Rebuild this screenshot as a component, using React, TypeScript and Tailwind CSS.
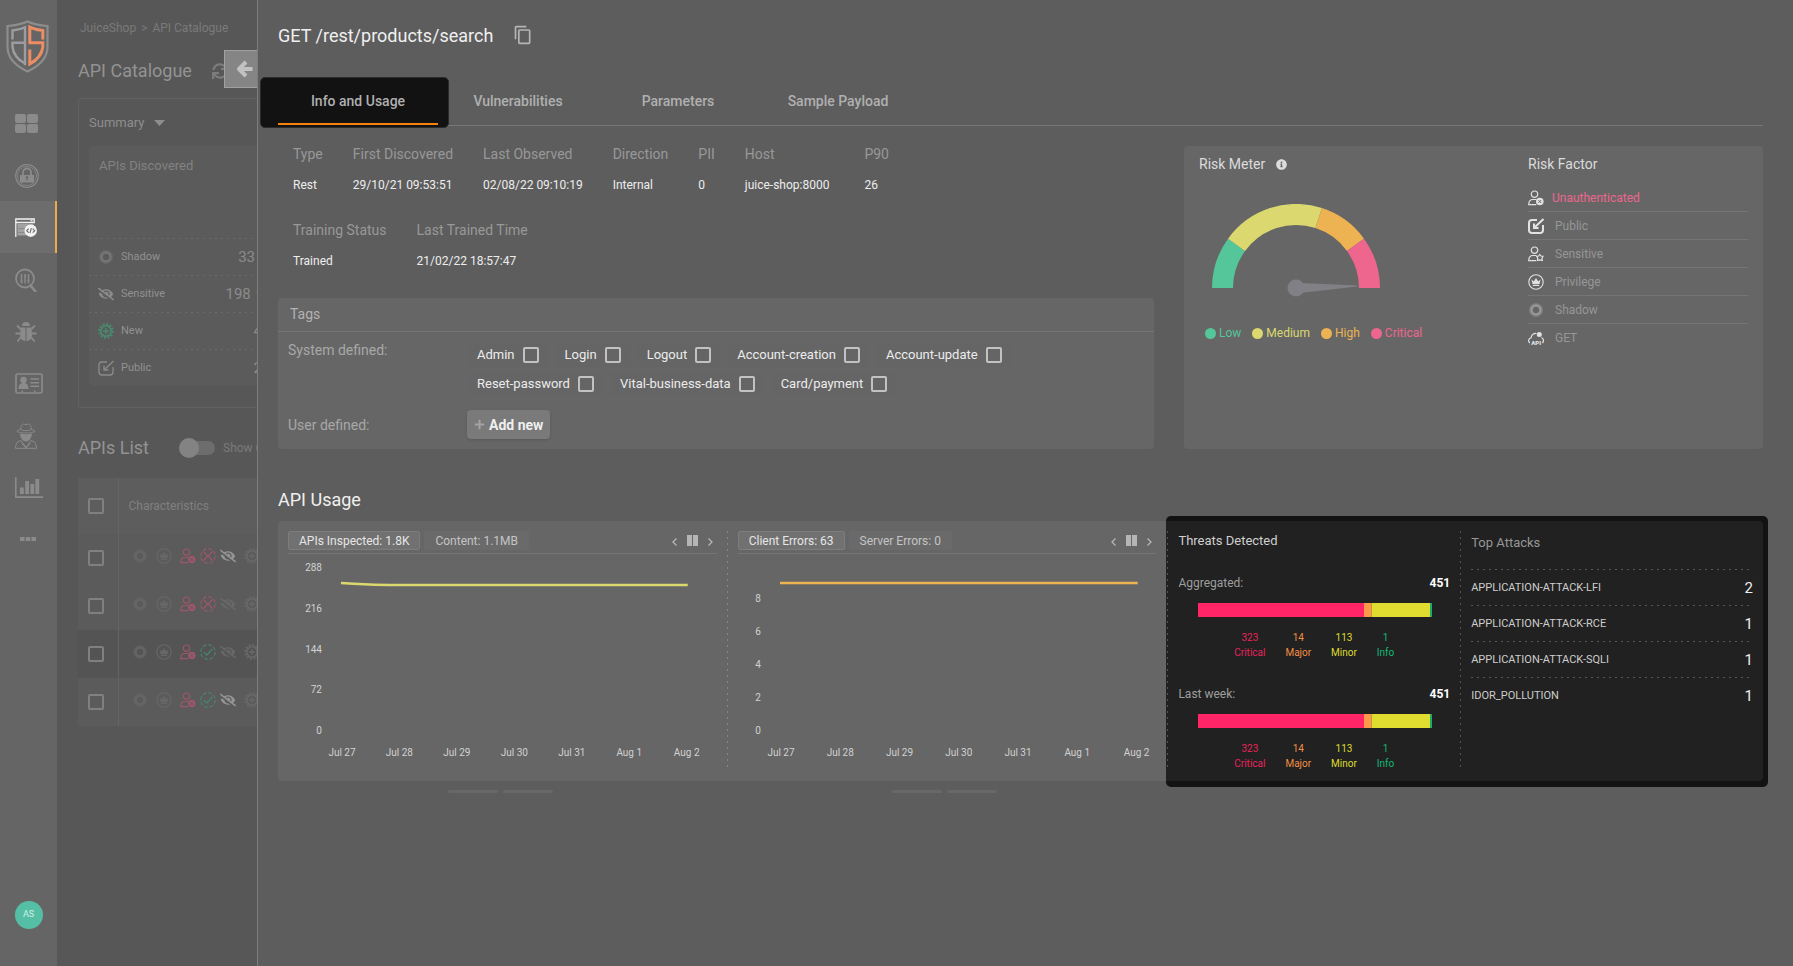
import type { ReactNode } from "react";
import { FaEyeSlash, FaInfoCircle, FaPlus, FaSync } from "react-icons/fa";
import { MdContentCopy } from "react-icons/md";
import clsx from "clsx";

const TABS = ["Info and Usage", "Vulnerabilities", "Parameters", "Sample Payload"];

const INFO = [
  ["Type", "Rest"],
  ["First Discovered", "29/10/21 09:53:51"],
  ["Last Observed", "02/08/22 09:10:19"],
  ["Direction", "Internal"],
  ["PII", "0"],
  ["Host", "juice-shop:8000"],
  ["P90", "26"],
];

const TRAINING = [
  ["Training Status", "Trained"],
  ["Last Trained Time", "21/02/22 18:57:47"],
];

const TAG_ROWS = [
  ["Admin", "Login", "Logout", "Account-creation", "Account-update"],
  ["Reset-password", "Vital-business-data", "Card/payment"],
];

const LEVELS = [
  { name: "Low", text: "text-[#55c59a]", dot: "bg-[#55c59a]" },
  { name: "Medium", text: "text-[#dbd86f]", dot: "bg-[#dbd86f]" },
  { name: "High", text: "text-[#edb352]", dot: "bg-[#edb352]" },
  { name: "Critical", text: "text-[#ee668e]", dot: "bg-[#ee668e]" },
];

const SEVERITIES = [
  { name: "Critical", count: 323, text: "text-[#e8235c]", bar: "bg-[#ff2566]" },
  { name: "Major", count: 14, text: "text-[#f28f45]", bar: "bg-[#ff9848]" },
  { name: "Minor", count: 113, text: "text-[#dedb2e]", bar: "bg-[#e1dc30]" },
  { name: "Info", count: 1, text: "text-[#15b877]", bar: "bg-[#1cab6c]" },
];

const ATTACKS = [
  ["APPLICATION-ATTACK-LFI", 2],
  ["APPLICATION-ATTACK-RCE", 1],
  ["APPLICATION-ATTACK-SQLI", 1],
  ["IDOR_POLLUTION", 1],
];

const DAYS = ["Jul 27", "Jul 28", "Jul 29", "Jul 30", "Jul 31", "Aug 1", "Aug 2"];

/* ---------- icons ---------- */

function Logo() {
  return (
    <svg viewBox="0 0 43 53" className="h-[53px] w-[43px]" fill="none">
      <path d="M21.500 1.500C15.500 4.300 8.500 5.500 1.500 6v21c0 11 8.500 19 20 24.500C33 46 41.500 38 41.500 27V6C34.500 5.500 27.500 4.300 21.500 1.500z" stroke="#8d8d8d" strokeWidth="2.200" />
      <path d="M6.500 19.500v-9C11.500 10 15.500 9 19 7.200v38M19 22.800H6.500V27c.8 7 5 12.500 12.500 16.500" stroke="#9d9da1" strokeWidth="2.400" />
      <path d="M36.800 19.500v-9C32 10 27.500 9 23.800 7.200v15.600h13V27c-.8 7-5 12.500-13 17V29.500" stroke="#ec8d66" strokeWidth="3" />
    </svg>
  );
}

function DashboardIcon() {
  return (
    <svg viewBox="0 0 23 19" className="h-[19px] w-[23px]" fill="currentColor">
      <rect width="11" height="9" rx="2" />
      <rect x="12" width="11" height="9" rx="2" />
      <rect y="10" width="11" height="9" rx="2" />
      <rect x="12" y="10" width="11" height="9" rx="2" />
    </svg>
  );
}

function LockIcon() {
  return (
    <svg viewBox="0 0 24 24" className="size-6" fill="none" stroke="currentColor">
      <circle cx="12" cy="12" r="11.300" strokeWidth="1.200" />
      <circle cx="12" cy="12" r="9.500" strokeWidth=".8" />
      <path d="M8 11V8.500a4 4 0 0 1 8 0V11" strokeWidth="1.800" />
      <path d="M5 11h14v7.500H5zM11.300 16.500h1.400l-.3-2a1.200 1.200 0 1 0-.8 0z" fill="currentColor" fillRule="evenodd" stroke="none" />
    </svg>
  );
}

function ApiIcon() {
  return (
    <svg viewBox="0 0 22 20" className="h-5 w-[22px]" fill="none">
      <path d="M.8 19V1h18.400v3.500H1" stroke="#f2f2f2" strokeWidth="1.300" />
      <path d="M15.500 2.700h2" stroke="#f2f2f2" strokeWidth="1.200" />
      <path d="M2.500 6h16v4h-7v7.500h-9z" fill="#a3a3a3" />
      <path d="M2.500 10.500h7M2.500 14.500h7" stroke="#8a8a8a" />
      <circle cx="15.700" cy="12.700" r="6.200" fill="#f2f2f2" />
      <path d="m13.700 10.700-2 2 2 2m4-4 2 2-2 2m-1.300-4.500-1.500 5" stroke="#6a6a6a" strokeWidth="1.100" />
    </svg>
  );
}

function SearchIcon() {
  return (
    <svg viewBox="0 0 22 24" className="h-6 w-[22px]" fill="none" stroke="currentColor">
      <circle cx="10" cy="10.500" r="9" strokeWidth="1.800" />
      <path d="m15.500 17.500 5 6" strokeWidth="2.600" strokeLinecap="round" />
      <path d="M6.500 6v9.500M10 6v9.500M13.500 6v9.500" strokeWidth="1.500" />
      <path d="M5.500 13h2M9 8.500h2M12.500 12.500h2" strokeWidth="1.500" />
    </svg>
  );
}

function BugIcon() {
  return (
    <svg viewBox="0 0 22 22" className="size-[22px]" fill="currentColor">
      <path d="M7 5a4 4 0 0 1 8 0z" />
      <path d="M5.500 6.500H10.500V20C7.500 20 5 17.500 5 14.500zM11.500 6.500h5L17 14.500c0 3-2.500 5.500-5.500 5.500z" />
      <path d="M5.500 8 2 4.500M5 12.500H.5M5.500 16.500 2.500 20.500M16.500 8 20 4.500M17 12.500h4.500M16.500 16.500l3 4" stroke="currentColor" strokeWidth="1.800" />
    </svg>
  );
}

function IdCardIcon() {
  return (
    <svg viewBox="0 0 28 21" className="h-[21px] w-7" fill="none" stroke="currentColor">
      <rect x="1" y="1" width="26" height="19" rx="1.500" strokeWidth="1.700" />
      <circle cx="8.500" cy="7" r="3.200" fill="currentColor" stroke="none" />
      <path d="M3.500 16c0-4 1.500-6 5-6s5 2 5 6zM6.500 17.500h1.500V19H6.500zM19 17.500h1.500V19H19z" fill="currentColor" stroke="none" />
      <path d="M15.500 6H24M15.500 9.700H24M15.500 13.300H24" strokeWidth="1.600" />
    </svg>
  );
}

function SpyIcon() {
  return (
    <svg viewBox="0 0 22 26" className="h-[26px] w-[22px]" fill="none" stroke="currentColor">
      <path d="M5.500 6.500C6 3 7 1 8.500 1c1 0 1.500.6 2.500.6S12.500 1 13.500 1C15 1 16 3 16.500 6.500c2 .6 3.500 1.300 3.500 2-1 .8-5 1.500-9 1.500s-8-.7-9-1.500c0-.7 1.500-1.400 3.500-2zM5.500 6.500C8 8 14 8 16.500 6.500" strokeWidth=".9" />
      <path d="M5 10.500c4 .9 8 .9 12 0 0 3.500-2.500 8-6 8s-6-4.500-6-8z" fill="currentColor" stroke="none" />
      <path d="M6 17.500 2.500 19C1 21 .6 23 .5 25.300h21c-.1-2.300-.5-4.300-2-6.300L16 17.500l-5 7-5-7zM6.500 20l4.500 5 4.500-5" strokeWidth="1" />
    </svg>
  );
}

function ChartIcon() {
  return (
    <svg viewBox="0 0 28 21" className="h-[21px] w-7" fill="currentColor">
      <path d="M0 0h1.600v19.300H28V21H0zM5 10.500h3.800V17H5zM10.200 4H14v13h-3.800zM15.400 7h3.800v10h-3.800zM20.400 2h3.800v15h-3.800z" />
    </svg>
  );
}

function DotsIcon() {
  return (
    <svg viewBox="0 0 16 4" className="h-1 w-4" fill="currentColor">
      <path d="M0 0h4.500v4H0zM5.700 0h4.500v4H5.700zM11.400 0H16v4h-4.600z" />
    </svg>
  );
}

function ArrowIcon() {
  return (
    <svg viewBox="0 0 18 18" className="size-[18px]" fill="none" stroke="currentColor" strokeWidth="4">
      <path d="M11 2 4 9l7 7M5 9h12.500" strokeLinejoin="round" />
    </svg>
  );
}

function RingIcon() {
  return (
    <svg viewBox="0 0 16 16" className="size-4" fill="none" stroke="currentColor">
      <circle cx="8" cy="8" r="6.300" strokeWidth="1.400" opacity=".4" />
      <circle cx="8" cy="8" r="4.500" strokeWidth="2.600" opacity=".85" />
    </svg>
  );
}

function CrownIcon() {
  return (
    <svg viewBox="0 0 16 16" className="size-4" fill="none" stroke="currentColor">
      <circle cx="8" cy="8" r="7.200" strokeWidth="1.100" />
      <path d="m3.500 5.500 2.300 2L8 4l2.200 3.500 2.300-2-1 4.500h-7zM4.800 10.800h6.400V12H4.800z" fill="currentColor" stroke="none" />
    </svg>
  );
}

function UserBadgeIcon({ star = false }: { star?: boolean }) {
  return (
    <svg viewBox="0 0 16 16" className="size-4" fill="none" stroke="currentColor">
      <circle cx="6.500" cy="4.200" r="3.200" strokeWidth="1.200" />
      <path d="M8.500 9.500H5C2 9.500.7 11.500.7 14.700h7.500" strokeWidth="1.200" />
      {star ? (
        <path d="m11.800 8.500 1.200 1.500 2 .3-1 1.800.3 2.300-2.500-.5-2.300.5.200-2.300-1-1.800 2-.3z" strokeWidth="1.200" />
      ) : (
        <>
          <circle cx="11.800" cy="11.500" r="3.800" fill="currentColor" stroke="none" />
          <path d="m10.400 10.100 2.800 2.800m0-2.800-2.800 2.800" stroke="#5d5d5d" strokeWidth=".9" />
        </>
      )}
    </svg>
  );
}

function StatusIcon({ ok }: { ok: boolean }) {
  return (
    <svg viewBox="0 0 16 16" className="size-4" fill="none" stroke="currentColor">
      <circle cx="8" cy="8" r="7.300" strokeWidth="1.100" strokeDasharray="4 1.700" />
      <path d={ok ? "m4 8.300 2.800 2.800L12.300 5" : "m3.500 3.500 9 9m0-9-9 9"} strokeWidth="1.300" />
    </svg>
  );
}

function GearPlusIcon() {
  return (
    <svg viewBox="0 0 16 16" className="size-4" fill="none" stroke="currentColor">
      <circle cx="8" cy="8" r="6.800" strokeWidth="2" strokeDasharray="1.900 1.660" />
      <circle cx="8" cy="8" r="5.200" strokeWidth="1.600" />
      <path d="M8 5v6M5 8h6" strokeWidth="1.300" />
    </svg>
  );
}

function PublicIcon({ bold = false }: { bold?: boolean }) {
  return (
    <svg viewBox="0 0 16 16" className="size-4" fill="none" stroke="currentColor" strokeWidth={bold ? 2 : 1.3}>
      <path d="M9 2H4a3 3 0 0 0-3 3v7a3 3 0 0 0 3 3h8a3 3 0 0 0 3-3V7" />
      <path d="M15.500 1 7 9M6 5.500V10h4.500" />
    </svg>
  );
}

function CloudApiIcon() {
  return (
    <svg viewBox="0 0 16 16" className="size-4" fill="none" stroke="currentColor">
      <path d="M1.800 13C0 11.500.2 8.300 3 7.800 3.500 4.500 6 3 8.500 3.500M13.500 7.500c2.300 1 2.500 4 .9 5.500" strokeWidth="1.200" />
      <circle cx="11.300" cy="4.500" r="2.500" fill="currentColor" stroke="none" />
      <text x="8.200" y="14.600" textAnchor="middle" fontSize="6" fontWeight="900" fill="currentColor" stroke="none">
        API
      </text>
    </svg>
  );
}

/* ---------- shared bits ---------- */

function Checkbox({ label }: { label?: string }) {
  return (
    <input
      type="checkbox"
      aria-label={label}
      className="size-4 shrink-0 appearance-none rounded-xs border-2 border-current"
    />
  );
}

function HDash({ className }: { className?: string }) {
  return (
    <div
      className={clsx(
        "h-px bg-[repeating-linear-gradient(90deg,currentColor_0_2px,transparent_2px_6px)]",
        className
      )}
    />
  );
}

function VDash({ className }: { className?: string }) {
  return (
    <div
      className={clsx(
        "my-[10px] w-px shrink-0 bg-[repeating-linear-gradient(180deg,currentColor_0_2px,transparent_2px_6px)]",
        className
      )}
    />
  );
}

/* ---------- left side ---------- */

function NavItem({ label, active, children }: { label: string; active?: boolean; children: ReactNode }) {
  return (
    <a
      href="#"
      aria-label={label}
      className={clsx(
        "flex h-[52px] items-center border-r-2",
        label === "More" ? "pl-5" : "pt-px pl-[15px]",
        active ? "border-[#edac4c] bg-[#6d6d6d]" : "border-transparent"
      )}
    >
      {children}
    </a>
  );
}

function Sidebar() {
  return (
    <nav className="flex w-[57px] shrink-0 flex-col bg-[#656565] text-[#8b8b8b]">
      <div className="flex h-[97px] pt-[20px] pl-[6px]">
        <Logo />
      </div>
      <NavItem label="Dashboard"><DashboardIcon /></NavItem>
      <NavItem label="Security"><LockIcon /></NavItem>
      <NavItem label="API Catalogue" active><ApiIcon /></NavItem>
      <NavItem label="Discover"><SearchIcon /></NavItem>
      <NavItem label="Bugs"><BugIcon /></NavItem>
      <NavItem label="Identities"><IdCardIcon /></NavItem>
      <NavItem label="Threat Actors"><SpyIcon /></NavItem>
      <NavItem label="Reports"><ChartIcon /></NavItem>
      <NavItem label="More"><DotsIcon /></NavItem>
      <button className="mx-auto mt-auto mb-[37px] flex size-7 items-center justify-center rounded-full bg-[#55bfa5] text-[9px] text-[#d5eee7]">
        AS
      </button>
    </nav>
  );
}

function SummaryRow({ icon, label, value, width }: { icon: ReactNode; label: string; value: string; width: string }) {
  return (
    <>
      <HDash className="text-[#6a6a6a]" />
      <div className="flex h-9 items-center pl-[9px] text-[#8b8b8b]">
        {icon}
        <span className="ml-[7px] w-[88px] text-[11px] text-[#919191]">{label}</span>
        <span className={clsx("shrink-0 text-right text-[15px]", width)}>{value}</span>
      </div>
    </>
  );
}

const API_ROWS = [
  { ok: false, sensitive: true, dark: false },
  { ok: false, sensitive: false, dark: false },
  { ok: true, sensitive: false, dark: true },
  { ok: true, sensitive: true, dark: false },
];

function Catalogue() {
  return (
    <div className="w-[200px] shrink-0 overflow-hidden bg-[#575757] pl-[21px] whitespace-nowrap">
      <div className="flex gap-[5px] pt-5 pl-[2px] text-[12px] leading-4 text-[#7a7a7a]">
        <a href="#">JuiceShop</a>
        <span>&gt;</span>
        <a href="#">API Catalogue</a>
      </div>
      <div className="mt-[23px] flex items-center gap-5 leading-6 text-[#939393]">
        <h1 className="text-[18px]">API Catalogue</h1>
        <FaSync className="size-4 shrink-0 text-[#7c7c7c]" />
      </div>

      <section className="mt-[15px] h-[310px] w-[300px] rounded-xs border border-[#616161] px-[10px] pt-[14px]">
        <button className="flex items-center gap-[10px] text-[13px] leading-5 text-[#8e8e8e]">
          Summary
          <svg viewBox="0 0 11 6" className="h-[6px] w-[11px]" fill="currentColor">
            <path d="M0 0h11L5.500 6z" />
          </svg>
        </button>
        <div className="mt-[13px] rounded-sm bg-[#5b5b5b]">
          <h2 className="h-[92px] pt-[10px] pl-[10px] text-[13px] leading-5 text-[#828282]">APIs Discovered</h2>
          <SummaryRow
            icon={
              <span className="text-[#7a7a7a]">
                <RingIcon />
              </span>
            }
            label="Shadow"
            value="33"
            width="w-[46px]"
          />
          <SummaryRow icon={<FaEyeSlash className="size-4" />} label="Sensitive" value="198 ↑" width="w-[53px]" />
          <SummaryRow
            icon={
              <span className="text-[#4a8b70]">
                <GearPlusIcon />
              </span>
            }
            label="New"
            value="4"
            width="w-[53px]"
          />
          <SummaryRow icon={<PublicIcon />} label="Public" value="2" width="w-[53px]" />
        </div>
      </section>

      <div className="mt-[28px] flex items-center leading-6">
        <h1 className="w-[101px] shrink-0 text-[18px] text-[#939393]">APIs List</h1>
        <button role="switch" aria-checked="false" aria-label="Show Columns" className="flex h-5 w-9 shrink-0 items-center">
          <span className="z-10 size-5 shrink-0 rounded-full bg-[#838383]" />
          <span className="-ml-2 h-[14px] w-6 shrink-0 rounded-r-full bg-[#6d6d6d]" />
        </button>
        <span className="ml-2 text-[12px] text-[#7a7a7a]">Show C</span>
      </div>

      <table className="mt-[18px] w-[300px] border-collapse text-left text-[#808080]">
        <thead>
          <tr className="h-14 bg-[#5d5d5d]">
            <th className="w-10 border-r border-[#646464] pl-[10px]">
              <span className="flex"><Checkbox label="Select all" /></span>
            </th>
            <th className="pl-[10px] text-[12px] font-normal">Characteristics</th>
          </tr>
        </thead>
        <tbody>
          {API_ROWS.map((row, i) => (
            <tr key={i} className={clsx("h-12", row.dark ? "bg-[#545454]" : "bg-[#5b5b5b]")}>
              <td className="border-r border-[#646464] pl-[10px]">
                <span className="flex"><Checkbox label={`Select API ${i + 1}`} /></span>
              </td>
              <td className="pb-1 pl-[13px] text-[#686868]">
                <span className="flex items-center">
                  <RingIcon />
                  <span className="ml-2"><CrownIcon /></span>
                  <span className="ml-2 text-[#9c566a]"><UserBadgeIcon /></span>
                  <span className={clsx("ml-1", row.ok ? "text-[#47856c]" : "text-[#9c566a]")}>
                    <StatusIcon ok={row.ok} />
                  </span>
                  <FaEyeSlash className={clsx("ml-1 size-4", row.sensitive && "text-[#949494]")} />
                  <span className="ml-2"><GearPlusIcon /></span>
                </span>
              </td>
            </tr>
          ))}
        </tbody>
      </table>
    </div>
  );
}

/* ---------- drawer ---------- */

function InfoList({ items }: { items: string[][] }) {
  return (
    <dl className="flex gap-[30px] pl-[15px]">
      {items.map(([label, value]) => (
        <div key={label} className={clsx(label === "Host" && "pr-[5px]")}>
          <dt className="text-[14px] leading-5 text-[#989898]">{label}</dt>
          <dd className="mt-[13px] text-[12px] leading-4 text-[#ededed]">{value}</dd>
        </div>
      ))}
    </dl>
  );
}

function Tags() {
  return (
    <section className="mt-[29px] rounded-sm bg-[#666666] text-[14px]">
      <h2 className="border-b border-[#757575] py-[6px] pl-3 leading-[21px] text-[#b2b2b2]">Tags</h2>
      <div className="px-[10px] pb-[10px] leading-5 text-[#a8a8a8]">
        <div className="flex pt-2">
          <span className="w-[180px] shrink-0">System defined:</span>
          <div className="flex flex-col gap-[5px] pt-[3px]">
            {TAG_ROWS.map((row) => (
              <div key={row[0]} className="flex flex-wrap gap-2">
                {row.map((tag) => (
                  <label
                    key={tag}
                    className="flex h-6 items-center gap-2 rounded-sm bg-[#656565] px-[9px] text-[13px] text-[#ececec]"
                  >
                    {tag}
                    <span className="flex text-[#c2c2c2]"><Checkbox /></span>
                  </label>
                ))}
              </div>
            ))}
          </div>
        </div>
        <div className="mt-[14px] flex items-center">
          <span className="w-[179px] shrink-0">User defined:</span>
          <button className="flex h-[29px] items-center gap-1 rounded-sm bg-[#7a7a7a] px-[7px] font-bold text-[#efefef] shadow-sm">
            <FaPlus className="size-[11px] text-[#a3a3a3]" />
            Add new
          </button>
        </div>
      </div>
    </section>
  );
}

function Gauge() {
  return (
    <svg viewBox="0 0 168 94" className="h-[94px] w-[168px]" fill="none" role="img" aria-label="Risk gauge">
      <g strokeWidth="21">
        <path d="M10.500 84A73.500 73.500 0 0 1 24.540 40.800" stroke="#55c59a" />
        <path d="M24.540 40.800A73.500 73.500 0 0 1 106.710 14.100" stroke="#dbd86f" />
        <path d="M106.710 14.100A73.500 73.500 0 0 1 143.460 40.800" stroke="#edb352" />
        <path d="M143.460 40.800A73.500 73.500 0 0 1 157.500 84" stroke="#ee668e" />
      </g>
      <circle cx="84" cy="84" r="8.500" fill="#808086" />
      <path d="M88 79l57.500 2.500v1L88 89z" fill="#808086" />
    </svg>
  );
}

const FACTORS = [
  { name: "Unauthenticated", icon: <UserBadgeIcon />, hot: true },
  { name: "Public", icon: <PublicIcon bold /> },
  { name: "Sensitive", icon: <UserBadgeIcon star /> },
  { name: "Privilege", icon: <CrownIcon /> },
  { name: "Shadow", icon: <RingIcon />, dim: true },
  { name: "GET", icon: <CloudApiIcon /> },
];

function Risk() {
  return (
    <section className="mt-5 flex justify-between rounded-sm bg-[#666666] px-[15px] pt-2">
      <div>
        <h2 className="flex items-center gap-[11px] text-[14px] leading-5 text-[#dcdcdc]">
          Risk Meter
          <FaInfoCircle className="size-[11px]" />
        </h2>
        <div className="mt-[30px] pl-[13px]">
          <Gauge />
        </div>
        <ul className="mt-[27px] flex gap-[11px] pl-[6px] text-[12px] leading-4">
          {LEVELS.map((l) => (
            <li key={l.name} className={clsx("flex items-center gap-[3px]", l.text)}>
              <span className={clsx("size-[11px] rounded-full", l.dot)} />
              {l.name}
            </li>
          ))}
        </ul>
      </div>
      <div className="w-[220px]">
        <h2 className="text-[14px] leading-5 text-[#dcdcdc]">Risk Factor</h2>
        <ul className="mt-[10px] text-[12px]">
          {FACTORS.map((f) => (
            <li
              key={f.name}
              className="flex h-7 items-center border-b border-[#767676] last:border-none"
            >
              <span className={f.dim ? "text-[#a0a0a0]" : "text-[#e2e2e2]"}>{f.icon}</span>
              <span className={f.hot ? "ml-2 text-[#ee668e]" : "ml-[11px] text-[#969696]"}>{f.name}</span>
            </li>
          ))}
        </ul>
      </div>
    </section>
  );
}

type ChartPanelProps = {
  tabs: [string, string];
  width: number;
  axisX: number;
  ticks: [string, number][];
  firstDay: number;
  dayStep: number;
  path: string;
  stroke: string;
};

function ChartPanel({ tabs, width, axisX, ticks, firstDay, dayStep, path, stroke }: ChartPanelProps) {
  return (
    <div className="min-w-0 p-[10px]">
      <div className="flex items-center border-b border-[#757575] pb-[3px] text-[12px] leading-4">
        <button className="h-[19px] rounded-xs border border-[#7d7d7d] bg-[#717171] px-[10px] text-[#e6e6e6]">{tabs[0]}</button>
        <button className="ml-1 h-[19px] rounded-xs bg-[#6a6a6a] px-[11px] text-[#c4c4c4]">{tabs[1]}</button>
        <div className="ml-auto flex items-center gap-[10px] pr-1 text-[#b5b5b5]">
          <button aria-label="Previous">
            <svg viewBox="0 0 5 8" className="mt-[3px] h-2 w-[5px]" fill="none" stroke="currentColor" strokeWidth="1.300">
              <path d="M4.500.5 1 4l3.500 3.500" />
            </svg>
          </button>
          <button aria-label="Pause">
            <svg viewBox="0 0 11 11" className="size-[11px]" fill="currentColor">
              <path d="M0 0h5v11H0zM6 0h5v11H6z" />
            </svg>
          </button>
          <button aria-label="Next">
            <svg viewBox="0 0 5 8" className="mt-[3px] h-2 w-[5px]" fill="none" stroke="currentColor" strokeWidth="1.300">
              <path d="M.5.500 4 4 .5 7.500" />
            </svg>
          </button>
        </div>
      </div>
      <svg viewBox={`0 0 ${width} 217`} className="w-full" fontSize="10">
        <g fill="#d2d2d2">
          {ticks.map(([t, y]) => (
            <text key={t} x={axisX} y={y} textAnchor="end">{t}</text>
          ))}
          {DAYS.map((d, i) => (
            <text key={d} x={firstDay + dayStep * i} y="202" textAnchor="middle">{d}</text>
          ))}
        </g>
        <path d={path} stroke={stroke} strokeWidth="2.500" fill="none" />
      </svg>
    </div>
  );
}

function ThreatBar({ label }: { label: string }) {
  return (
    <div className="text-[12px]">
      <div className="flex justify-between leading-4">
        <span className="text-[#9e9e9e]">{label}</span>
        <strong className="text-white">451</strong>
      </div>
      <div className="mt-3 mr-[18px] ml-5 flex h-[14px]">
        {SEVERITIES.map((s) => (
          <div
            key={s.name}
            className={clsx("min-w-[2px]", s.bar, s.name === "Major" && "border-r border-[#b5a03a]")}
            style={{ flexGrow: s.count, flexBasis: 0 }}
          />
        ))}
      </div>
      <ul className="mt-[13px] flex justify-center gap-5 text-center text-[10px] leading-[15px]">
        {SEVERITIES.map((s) => (
          <li key={s.name} className={s.text}>
            <div>{s.count}</div>
            <div>{s.name}</div>
          </li>
        ))}
      </ul>
    </div>
  );
}

function Threats() {
  return (
    <div className="-mt-[5px] -mr-[5px] -mb-[6px] flex rounded-[5px] bg-[#121212] pt-[5px] pr-[5px] pb-[6px]">
      <div className="grid flex-1 grid-cols-[2px_292fr_1px_302fr] rounded-r-[4px] bg-[#212121]">
        <VDash className="ml-px text-[#555555]" />
        <div className="px-[10px] pt-[10px]">
          <h3 className="text-[13px] leading-5 text-[#cfcfcf]">Threats Detected</h3>
          <div className="mt-6 flex flex-col gap-[26px]">
            <ThreatBar label="Aggregated:" />
            <ThreatBar label="Last week:" />
          </div>
        </div>
        <VDash className="text-[#555555]" />
        <div className="px-[10px] pt-3">
          <h3 className="pb-4 text-[13px] leading-5 text-[#979797]">Top Attacks</h3>
          {ATTACKS.map(([name, count]) => (
            <div key={name}>
              <HDash className="text-[#555555]" />
              <div className="flex h-[35px] items-center justify-between pt-[2px]">
                <span className="text-[11px] text-[#cdcdcd]">{name}</span>
                <span className="text-[15px] text-[#ededed]">{count}</span>
              </div>
            </div>
          ))}
        </div>
      </div>
    </div>
  );
}

function Pager() {
  return (
    <div className="flex justify-center gap-[5px] pr-1">
      <span className="h-[3px] w-[50px] rounded-full bg-[#686868]" />
      <span className="h-[3px] w-[50px] rounded-full bg-[#686868]" />
    </div>
  );
}

function Drawer() {
  return (
    <main className="relative min-w-0 flex-1 border-l border-[#7d7d7d] bg-[#5d5d5d] pt-[23px] pr-[30px] pl-5">
      <button
        aria-label="Close"
        className="absolute top-[50px] -left-[34px] flex h-[38px] w-[33px] items-center justify-center border border-r-0 border-[#a0a0a0] bg-[#858585] pl-[6px] text-[#c2c2c2]"
      >
        <ArrowIcon />
      </button>

      <div className="flex h-6 items-center gap-5">
        <h1 className="text-[18px] text-[#f0f0f0]">GET /rest/products/search</h1>
        <button aria-label="Copy">
          <MdContentCopy className="size-5 text-[#b5b5b5]" />
        </button>
      </div>

      <div role="tablist" className="mt-[31px] flex border-b border-[#787878]">
        {TABS.map((tab, i) => (
          <button
            key={tab}
            role="tab"
            aria-selected={i === 0}
            className="relative isolate h-[47px] w-40 text-[14px] font-medium text-[#b0b0b0]"
          >
            {i === 0 && (
              <>
                <span className="absolute -top-px -right-[11px] -bottom-[3px] -left-[18px] -z-10 rounded-[5px] border border-[#2b2b2b] bg-[#121212]" />
                <span className="absolute inset-x-0 bottom-0 h-[2px] bg-[#f5820f]" />
              </>
            )}
            {tab}
          </button>
        ))}
      </div>

      <div className="grid grid-cols-[876fr_579fr] gap-[30px]">
        <div className="min-w-0 pt-[18px]">
          <InfoList items={INFO} />
          <div className="mt-[27px]">
            <InfoList items={TRAINING} />
          </div>
          <Tags />
        </div>
        <Risk />
      </div>

      <h1 className="mt-[39px] text-[18px] leading-6 text-[#f0f0f0]">API Usage</h1>
      <section className="mt-[9px] grid grid-cols-[449fr_1px_439fr_597fr] rounded-sm bg-[#666666]">
        <ChartPanel
          tabs={["APIs Inspected: 1.8K", "Content: 1.1MB"]}
          width={429}
          axisX={34}
          ticks={[["288", 17], ["216", 58], ["144", 99], ["72", 139], ["0", 180]]}
          firstDay={54}
          dayStep={57.5}
          path="M53 29C75 30 80 31 102 31H400"
          stroke="#dbd86f"
        />
        <VDash className="text-[#868686]" />
        <ChartPanel
          tabs={["Client Errors: 63", "Server Errors: 0"]}
          width={419}
          axisX={23}
          ticks={[["8", 48], ["6", 81], ["4", 114], ["2", 147], ["0", 180]]}
          firstDay={43}
          dayStep={59.3}
          path="M42 29H400"
          stroke="#edb352"
        />
        <Threats />
      </section>
      <div className="mt-[9px] grid grid-cols-[449fr_440fr_597fr]">
        <Pager />
        <Pager />
      </div>
    </main>
  );
}

export default function App() {
  return (
    <div className="flex min-h-screen bg-[#5d5d5d] font-['Roboto',sans-serif]">
      <Sidebar />
      <Catalogue />
      <Drawer />
    </div>
  );
}
